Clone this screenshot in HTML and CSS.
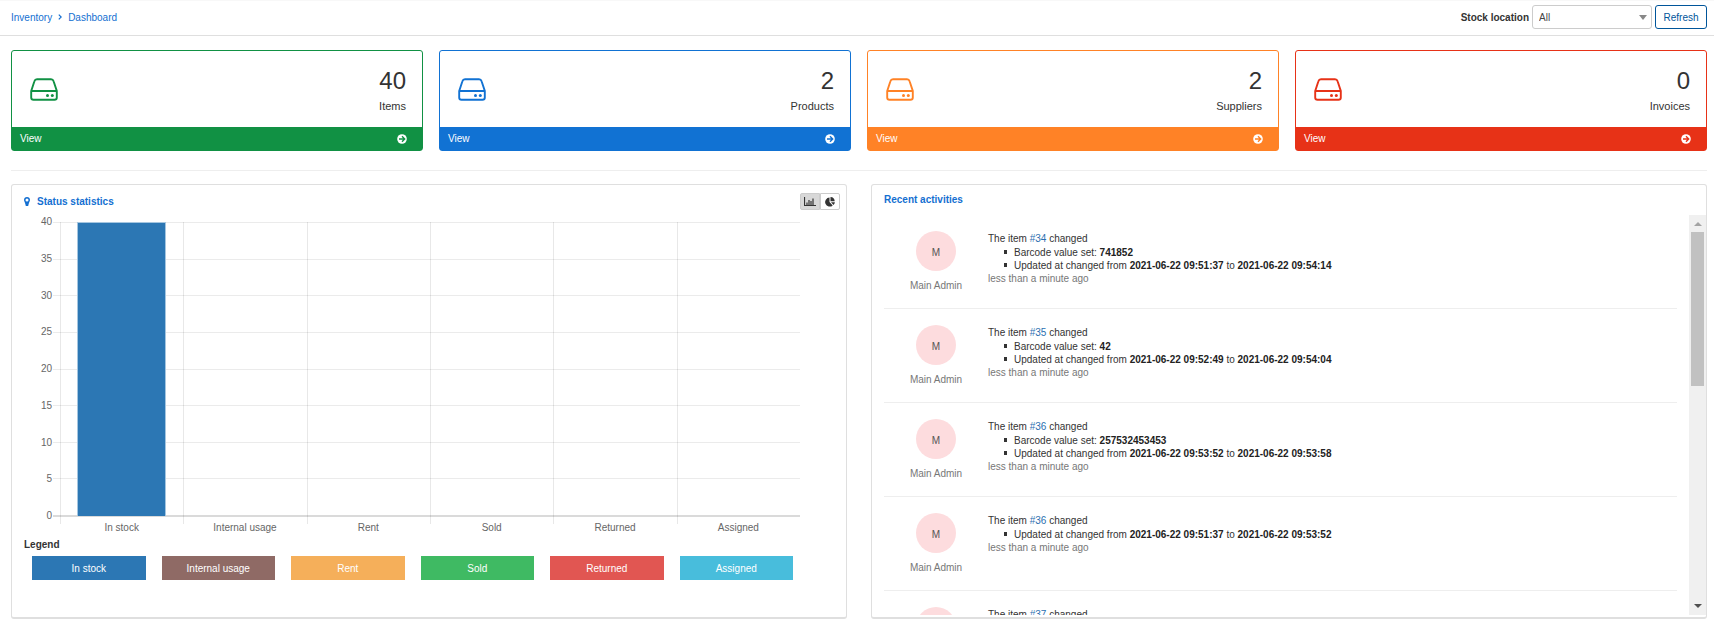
FILE: index.html
```html
<!DOCTYPE html>
<html lang="en">
<head>
<meta charset="utf-8">
<title>Inventory dashboard</title>
<link rel="stylesheet" href="styles.css">
</head>
<body>
<svg class="sprite" aria-hidden="true">
  <symbol id="drive" viewBox="0 0 28 23">
    <path d="M1.200 13 4.400 3.200Q5 1.200 7 1.200H21Q23 1.200 23.600 3.200L26.800 13V19.500Q26.800 21.800 24.500 21.800H3.500Q1.200 21.800 1.200 19.500ZM1.200 13H26.800" fill="none" stroke="currentColor" stroke-width="1.900"/>
    <circle cx="17.500" cy="17.400" r="1.500" fill="currentColor"/>
    <circle cx="22.300" cy="17.400" r="1.500" fill="currentColor"/>
  </symbol>
  <symbol id="go" viewBox="0 0 10 10">
    <circle cx="5" cy="5" r="4.800" fill="#fff"/>
    <path d="M2 5H7.500M5 2.300 7.700 5 5 7.700" fill="none" stroke="currentColor" stroke-width="1.400"/>
  </symbol>
</svg>
<header class="topbar">
  <nav class="crumbs" aria-label="Breadcrumb">
    <a href="#">Inventory</a>
    <svg class="crumb-sep" viewBox="0 0 4 6" aria-hidden="true"><path d="M.8.6 3.200 3 .8 5.400" fill="none" stroke="currentColor" stroke-width="1.200"/></svg>
    <a href="#">Dashboard</a>
  </nav>
  <form class="filter">
    <label for="location">Stock location</label>
    <div class="select-wrap">
      <select id="location"><option>All</option></select>
    </div>
    <button type="button" class="refresh">Refresh</button>
  </form>
</header>
<main>
  <section class="cards">
    <article class="card green">
      <div class="card-body"><svg class="drive"><use href="#drive"/></svg><div class="figure"><div class="count">40</div><div>Items</div></div></div>
      <a class="card-link" href="#">View<svg class="go"><use href="#go"/></svg></a>
    </article>
    <article class="card blue">
      <div class="card-body"><svg class="drive"><use href="#drive"/></svg><div class="figure"><div class="count">2</div><div>Products</div></div></div>
      <a class="card-link" href="#">View<svg class="go"><use href="#go"/></svg></a>
    </article>
    <article class="card orange">
      <div class="card-body"><svg class="drive"><use href="#drive"/></svg><div class="figure"><div class="count">2</div><div>Suppliers</div></div></div>
      <a class="card-link" href="#">View<svg class="go"><use href="#go"/></svg></a>
    </article>
    <article class="card red">
      <div class="card-body"><svg class="drive"><use href="#drive"/></svg><div class="figure"><div class="count">0</div><div>Invoices</div></div></div>
      <a class="card-link" href="#">View<svg class="go"><use href="#go"/></svg></a>
    </article>
  </section>
  <hr class="divider">
  <div class="panels">
    <section class="panel stats">
      <div class="stats-head">
        <h2><svg class="pin" viewBox="0 0 6 9" aria-hidden="true"><path fill-rule="evenodd" d="M3 0C4.800 0 6 1.200 6 3 6 4.500 4.600 5.800 4.200 9H1.800C1.400 5.800 0 4.500 0 3 0 1.200 1.200 0 3 0ZM3 1.500A1.500 1.500 0 1 0 3 4.500 1.500 1.500 0 1 0 3 1.500Z" fill="currentColor"/></svg>Status statistics</h2>
        <div class="toggle">
          <button type="button" class="active" aria-label="Bar chart"><svg class="bars-icon" viewBox="0 0 12 9"><path d="M.5 0V8.500H12M3 8V5.500M5 8V3M7 8V4M9 8V1.500" fill="none" stroke="currentColor" stroke-width="1.200"/></svg></button>
          <button type="button" aria-label="Pie chart"><svg class="pie-icon" viewBox="0 0 10 10"><path d="M4.500.6V5L7.700 8.400A4.500 4.500 0 1 1 4.500.6Z" fill="currentColor"/><path d="M5.500 0A4.400 4.400 0 0 1 9.700 4.200H5.500ZM6 5.200H9.900A4.500 4.500 0 0 1 8.500 7.900Z" fill="currentColor"/></svg></button>
        </div>
      </div>
      <div class="chart">
        <div class="y-axis"><span>40</span><span>35</span><span>30</span><span>25</span><span>20</span><span>15</span><span>10</span><span>5</span><span>0</span></div>
        <div class="rows"><i></i><i></i><i></i><i></i><i></i><i></i><i></i><i></i></div>
        <div class="cols">
          <div><b class="bar" style="height:100%"></b></div><div></div><div></div><div></div><div></div><div></div>
        </div>
        <div class="x-axis"><span>In stock</span><span>Internal usage</span><span>Rent</span><span>Sold</span><span>Returned</span><span>Assigned</span></div>
      </div>
      <h3>Legend</h3>
      <div class="legend">
        <button type="button" class="in-stock">In stock</button>
        <button type="button" class="internal">Internal usage</button>
        <button type="button" class="rent">Rent</button>
        <button type="button" class="sold">Sold</button>
        <button type="button" class="returned">Returned</button>
        <button type="button" class="assigned">Assigned</button>
      </div>
    </section>
    <section class="panel recent">
      <h2>Recent activities</h2>
      <div class="feed">
        <div class="feed-list">
          <article class="entry">
            <div class="who"><div class="avatar">M</div>Main Admin</div>
            <div class="what"><p>The item <a href="#">#34</a> changed</p>
              <ul><li>Barcode value set: <strong>741852</strong></li><li>Updated at changed from <strong>2021-06-22 09:51:37</strong> to <strong>2021-06-22 09:54:14</strong></li></ul>
              <time>less than a minute ago</time></div>
          </article>
          <article class="entry">
            <div class="who"><div class="avatar">M</div>Main Admin</div>
            <div class="what"><p>The item <a href="#">#35</a> changed</p>
              <ul><li>Barcode value set: <strong>42</strong></li><li>Updated at changed from <strong>2021-06-22 09:52:49</strong> to <strong>2021-06-22 09:54:04</strong></li></ul>
              <time>less than a minute ago</time></div>
          </article>
          <article class="entry">
            <div class="who"><div class="avatar">M</div>Main Admin</div>
            <div class="what"><p>The item <a href="#">#36</a> changed</p>
              <ul><li>Barcode value set: <strong>257532453453</strong></li><li>Updated at changed from <strong>2021-06-22 09:53:52</strong> to <strong>2021-06-22 09:53:58</strong></li></ul>
              <time>less than a minute ago</time></div>
          </article>
          <article class="entry">
            <div class="who"><div class="avatar">M</div>Main Admin</div>
            <div class="what"><p>The item <a href="#">#36</a> changed</p>
              <ul><li>Updated at changed from <strong>2021-06-22 09:51:37</strong> to <strong>2021-06-22 09:53:52</strong></li></ul>
              <time>less than a minute ago</time></div>
          </article>
          <article class="entry">
            <div class="who"><div class="avatar"></div></div>
            <div class="what"><p>The item <a href="#">#37</a> changed</p></div>
          </article>
        </div>
        <div class="scrollbar" aria-hidden="true">
          <svg class="arrow up" viewBox="0 0 8 4"><path d="M0 4 4 0 8 4Z" fill="currentColor"/></svg>
          <div class="track"><div class="thumb" style="height:42%"></div></div>
          <svg class="arrow down" viewBox="0 0 8 4"><path d="M0 0H8L4 4Z" fill="currentColor"/></svg>
        </div>
      </div>
    </section>
  </div>
</main>
</body>
</html>
```
FILE: styles.css
```css
* { box-sizing: border-box; }
body, h2, h3, p, ul { margin: 0; padding: 0; }
body {
  background: #fff;
  color: #333;
  font: 10px/13px "Liberation Sans", Arial, sans-serif;
}
svg { display: block; }
a { color: #146fd1; text-decoration: none; }
button, select { font: inherit; }
.sprite { position: absolute; width: 0; height: 0; }

.topbar {
  display: flex;
  align-items: center;
  justify-content: space-between;
  height: 36px;
  padding: 0 7px 2px 11px;
  border-top: 1px solid #f8f8f8;
  border-bottom: 1px solid #dfdfdf;
}
.crumbs { display: flex; align-items: center; gap: 6px; }
.crumb-sep { width: 4px; height: 6px; color: #146fd1; }
.filter { display: flex; align-items: center; gap: 3px; }
.filter label { font-weight: bold; }
.select-wrap { position: relative; }
.select-wrap::after {
  content: "";
  position: absolute;
  top: 10px;
  right: 5px;
  border: solid transparent;
  border-width: 5px 4px 0;
  border-top-color: #888;
}
select {
  display: block;
  width: 120px;
  height: 24px;
  padding: 0 6px;
  appearance: none;
  border: 1px solid #ccc;
  border-radius: 3px;
  background: #fff;
  color: #444;
}
.refresh {
  width: 52px;
  height: 24px;
  padding: 0;
  border: 1px solid #00559a;
  border-radius: 3px;
  background: #fff;
  color: #00559a;
}

main { padding: 14px 7px 10px 11px; }
.cards { display: grid; grid-template-columns: repeat(4, 1fr); gap: 16px; }
.card { border: 1px solid; border-radius: 3px; }
.green { color: #119144; }
.blue { color: #1172d3; }
.orange { color: #ff8226; }
.red { color: #e73217; }
.card-body {
  display: flex;
  align-items: center;
  justify-content: space-between;
  height: 76px;
  padding: 0 16px 0 18px;
}
.drive { width: 28px; height: 23px; }
.figure { padding-top: 4px; color: #333; text-align: right; font-size: 11px; line-height: 20px; }
.count { font-size: 24px; line-height: 30px; }
.card-link {
  display: flex;
  align-items: center;
  justify-content: space-between;
  height: 23px;
  padding: 0 15px 0 8px;
  background: currentColor;
  color: inherit;
  -webkit-text-fill-color: #fff;
}
.go { width: 10px; height: 10px; }
.divider { margin: 19px 0 13px; border: 0; border-top: 1px solid #eee; }

.panels { display: grid; grid-template-columns: 1fr 1fr; gap: 24px; }
.panel {
  height: 435px;
  border: 1px solid #dfdfdf;
  border-bottom-width: 2px;
  border-radius: 3px;
}
h2 { color: #146fd1; font-size: 10px; line-height: 13px; }
.stats { padding: 8px 6px 0 12px; }
.stats-head { display: flex; justify-content: space-between; align-items: center; }
.stats-head h2 { display: flex; align-items: center; gap: 7px; }
.pin { width: 6px; height: 9px; }
.toggle { display: flex; }
.toggle button {
  display: grid;
  place-items: center;
  width: 20px;
  height: 17px;
  padding: 0;
  border: 1px solid #ccc;
  border-radius: 0 2px 2px 0;
  background: #fff;
  color: #333;
}
.toggle .active { border-radius: 2px 0 0 2px; background: #d8d8d8; }
.bars-icon { width: 12px; height: 9px; }
.pie-icon { width: 10px; height: 10px; }

.chart {
  display: grid;
  grid-template-columns: 29px 7px 1fr;
  grid-template-rows: 295px 4px auto;
  margin: 12px 40px 0 0;
  color: #666;
}
.y-axis {
  grid-area: 1 / 1;
  display: flex;
  flex-direction: column;
  justify-content: space-between;
  margin: -7px 0 -5px;
  text-align: right;
  padding-right: 1px;
}
.rows {
  grid-area: 1 / 2 / 2 / 4;
  display: flex;
  flex-direction: column;
  border-bottom: 2px solid #dadada;
}
.rows i { flex: 1; border-top: 1px solid #ebebeb; }
.cols {
  grid-area: 1 / 3 / 3 / 4;
  display: grid;
  grid-template-columns: repeat(6, 1fr);
  margin-bottom: -3px;
}
.cols div { padding: 0 17px 8px 16px; border-left: 1px solid rgba(0, 0, 0, .09); }
.bar {
  display: block;
  background: #2c77b4;
  border: 1px solid #a5c6e0;
  border-bottom: 0;
}
.x-axis {
  grid-area: 3 / 3;
  display: grid;
  grid-template-columns: repeat(6, 1fr);
  text-align: center;
}
h3 { margin-top: 4px; font-size: 10px; line-height: 13px; }
.legend {
  display: grid;
  grid-template-columns: repeat(6, 1fr);
  gap: 16px;
  margin: 5px 47px 0 8px;
}
.legend button { height: 24px; padding: 0; border: 0; color: #fff; }
.legend .in-stock { background: #2c77b4; }
.legend .internal { background: #8f6a65; }
.legend .rent { background: #f5af5a; }
.legend .sold { background: #3fba63; }
.legend .returned { background: #e15652; }
.legend .assigned { background: #48bddc; }

.recent { padding: 8px 0 0 12px; }
.feed { display: flex; height: 400px; margin-top: 9px; }
.feed-list { flex: 1; overflow: hidden; padding-right: 12px; }
.entry {
  display: grid;
  grid-template-columns: 104px 1fr;
  height: 94px;
  padding-top: 16px;
  border-bottom: 1px solid #eee;
}
.who { text-align: center; color: #777; }
.avatar {
  width: 40px;
  height: 40px;
  margin: 0 auto 8px;
  border-radius: 50%;
  background: #fddcde;
  color: #555;
  line-height: 43px;
}
.what p { line-height: 15px; }
.what a { color: #2a6fb0; }
.what ul { padding-left: 16px; list-style: none; }
.what li::before {
  content: "";
  display: inline-block;
  width: 3px;
  height: 4px;
  margin-right: 7px;
  background: #333;
  vertical-align: 2px;
}
.what strong { color: #222; }
time { display: block; color: #777; }
.scrollbar {
  display: flex;
  flex-direction: column;
  align-items: center;
  width: 17px;
  background: #f0f0f0;
}
.track { flex: 1; width: 13px; }
.thumb { background: #c1c1c1; }
.arrow { width: 8px; height: 4px; }
.up { margin: 7px 0 6px; color: #a3a3a3; }
.down { margin: 6px 0 7px; color: #505050; }
```
